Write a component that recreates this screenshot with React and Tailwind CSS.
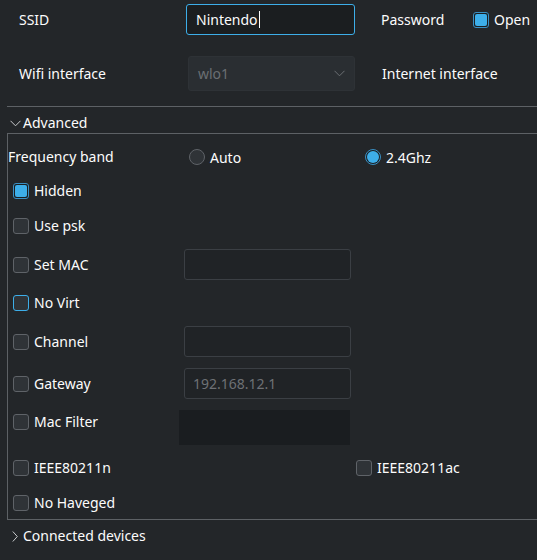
import React from "react";

function Check({ checked = false, focus = false }) {
  if (checked) {
    return (
      <span className="flex h-[16px] w-[16px] shrink-0 items-center justify-center rounded-[3px] border border-[#3a8fc2] bg-[#1b1e20]">
        <span className="h-[12px] w-[12px] rounded-[2px] bg-[#3daee9]" />
      </span>
    );
  }
  return (
    <span
      className={
        "block h-[16px] w-[16px] shrink-0 rounded-[3px] border bg-[#2f3337] " +
        (focus ? "border-[#3daee9]" : "border-[#5f6368]")
      }
    />
  );
}

function Radio({ checked = false }) {
  if (checked) {
    return (
      <span className="flex h-[16px] w-[16px] shrink-0 items-center justify-center rounded-full border border-[#3a8fc2] bg-[#1b1e20]">
        <span className="h-[12px] w-[12px] rounded-full bg-[#3daee9]" />
      </span>
    );
  }
  return <span className="block h-[16px] w-[16px] shrink-0 rounded-full border border-[#5f6368] bg-[#2f3337]" />;
}

function CheckRow({ label, checked, focus, className = "" }) {
  return (
    <div className={"flex items-center gap-[5px] " + className}>
      <Check checked={checked} focus={focus} />
      <span className="leading-[20px]">{label}</span>
    </div>
  );
}

function Field({ value, placeholder }) {
  return (
    <div className="flex h-[31px] w-[167px] items-center rounded-[3px] border border-[#3b3f44] bg-[#202326] px-[8px] text-[#6e7175]">
      {value}
      {placeholder}
    </div>
  );
}

function ChevronDown({ className = "" }) {
  return (
    <svg className={className} width="11" height="7" viewBox="0 0 11 7" fill="none">
      <path d="M0.5 0.8 L5.5 5.8 L10.5 0.8" stroke="currentColor" strokeWidth="1" />
    </svg>
  );
}

function ChevronRight({ className = "" }) {
  return (
    <svg className={className} width="6" height="11" viewBox="0 0 6 11" fill="none">
      <path d="M0.8 0.5 L5.3 5.5 L0.8 10.5" stroke="currentColor" strokeWidth="1" />
    </svg>
  );
}

export default function App() {
  return (
    <div className="h-[560px] w-[537px] overflow-hidden bg-[#232629] font-['Noto_Sans',sans-serif] text-[14px] text-[#fcfcfc]">
      {/* SSID / password */}
      <div className="mt-[4px] flex h-[31px] items-center">
        <span className="w-[186px] pl-[19px]">SSID</span>
        <div className="flex h-[31px] w-[169px] items-center rounded-[3px] border border-[#3daee9] bg-[#1b1e20] pl-[9px]">
          <span>Nintendo</span>
          <span className="ml-px h-[17px] w-px bg-[#fcfcfc]" />
        </div>
        <span className="ml-[26px] w-[92px]">Password</span>
        <Check checked />
        <span className="ml-[5px]">Open</span>
      </div>

      {/* Interfaces */}
      <div className="mt-[21px] flex h-[35px] items-center">
        <span className="w-[188px] pl-[19px]">Wifi interface</span>
        <div className="flex h-[35px] w-[167px] items-center justify-between rounded-[3px] border border-[#2e3236] bg-[#2a2e32] pl-[9px] pr-[9px] text-[#6b6f73]">
          <span>wlo1</span>
          <ChevronDown className="text-[#6b6f73]" />
        </div>
        <span className="ml-[27px]">Internet interface</span>
      </div>

      <div className="ml-[7px] mt-[15px] h-px bg-[#5d6165]" />

      {/* Advanced section */}
      <div className="flex h-[26px] items-start pl-[10px] pt-[6px]">
        <div className="flex h-[20px] items-center gap-[2px]">
          <ChevronDown className="text-[#c8cacc]" />
          <span className="leading-[20px]">Advanced</span>
        </div>
      </div>

      <div className="ml-[7px] border-y border-l border-[#5d6165] pb-[6px]">
        <div className="mt-[13px] flex h-[20px] items-center">
          <span className="w-[181px] leading-[20px]">Frequency band</span>
          <Radio />
          <span className="ml-[5px] w-[155px]">Auto</span>
          <Radio checked />
          <span className="ml-[5px]">2.4Ghz</span>
        </div>

        <CheckRow className="mt-[14px] h-[20px] pl-[5px]" label="Hidden" checked />
        <CheckRow className="mt-[15px] h-[20px] pl-[5px]" label="Use psk" />

        <div className="mt-[13px] flex h-[31px] items-center">
          <CheckRow className="w-[176px] pl-[5px]" label="Set MAC" />
          <Field />
        </div>

        <CheckRow className="mt-[13px] h-[20px] pl-[5px]" label="No Virt" focus />

        <div className="mt-[13px] flex h-[31px] items-center">
          <CheckRow className="w-[176px] pl-[5px]" label="Channel" />
          <Field />
        </div>

        <div className="mt-[11px] flex h-[31px] items-center">
          <CheckRow className="w-[176px] pl-[5px]" label="Gateway" />
          <Field placeholder="192.168.12.1" />
        </div>

        <div className="mt-[11px] flex h-[35px] items-start">
          <CheckRow className="mt-[2px] w-[171px] pl-[5px]" label="Mac Filter" />
          <div className="h-[35px] w-[171px] bg-[#1a1d20]" />
        </div>

        <div className="mt-[13px] flex h-[20px] items-center">
          <CheckRow className="w-[348px] pl-[5px]" label="IEEE80211n" />
          <CheckRow label="IEEE80211ac" />
        </div>

        <CheckRow className="mt-[15px] h-[20px] pl-[5px]" label="No Haveged" />
      </div>

      {/* Connected devices section */}
      <div className="flex h-[26px] items-start pl-[12px] pt-[6px]">
        <div className="flex h-[20px] items-center gap-[5px]">
          <ChevronRight className="text-[#c8cacc]" />
          <span className="leading-[20px]">Connected devices</span>
        </div>
      </div>
    </div>
  );
}
